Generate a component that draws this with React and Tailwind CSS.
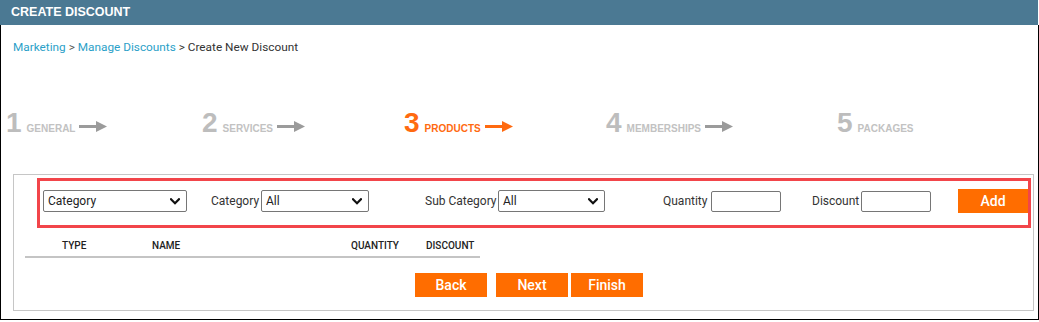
import React from "react";

const Arrow = ({ color }) => (
  <svg width="28" height="11" viewBox="0 0 28 11" className="ml-[4px] shrink-0">
    <rect x="0" y="4" width="18" height="3" fill={color} />
    <polygon points="17,0 28,5.5 17,11" fill={color} />
  </svg>
);

const Step = ({ n, label, active, arrow, w }) => {
  const numCls = active ? "text-[#ff6a10]" : "text-[#bdbdbd]";
  const lblCls = active ? "text-[#ff6a10]" : "text-[#c2c2c2]";
  return (
    <div className={`flex items-baseline shrink-0 ${w}`}>
      <span className={`font-['Liberation_Sans',Arial,sans-serif] font-bold text-[28px] leading-[28px] ${numCls}`}>{n}</span>
      <span className={`ml-[5px] font-['Liberation_Sans',Arial,sans-serif] font-bold text-[10px] leading-[12px] ${lblCls}`}>{label}</span>
      {arrow && <Arrow color={active ? "#ff6a10" : "#9b9b9b"} />}
    </div>
  );
};

const Chevron = () => (
  <svg width="10" height="7" viewBox="0 0 10 7" className="shrink-0">
    <path d="M1 1.2 L5 5.2 L9 1.2" fill="none" stroke="#111" strokeWidth="2.2" strokeLinecap="square" />
  </svg>
);

const Select = ({ text, w }) => (
  <div className={`flex items-center justify-between h-[22px] ${w} border border-[#767676] rounded-[2px] bg-white pl-[4px] pr-[6px] shrink-0`}>
    <span className="text-[12px] text-[#222] leading-none">{text}</span>
    <Chevron />
  </div>
);

const Input = () => (
  <div className="h-[21px] w-[70px] border border-[#767676] rounded-[2px] bg-white shrink-0" />
);

const Btn = ({ children, cls }) => (
  <div className={`h-[24px] w-[72px] bg-[#ff6d00] text-white flex items-center justify-center text-[14px] font-medium ${cls}`}>{children}</div>
);

export default function App() {
  return (
    <div className="w-[1039px] h-[322px] bg-white font-['Roboto',sans-serif]">
      <div className="w-[1038px] h-[25px] bg-[#4b7993] flex items-center pl-[11px]">
        <span className="text-white font-bold text-[12.5px] font-['Liberation_Sans',Arial,sans-serif]">CREATE DISCOUNT</span>
      </div>
      <div className="w-[1039px] h-[295px] border-l border-r-[1px] border-b border-black">
        <div className="pt-[15px] pl-[12px] text-[11.8px] leading-[14px] text-[#333]">
          <span className="text-[#2b9fc8]">Marketing</span>
          <span className="text-[#555]"> &gt; </span>
          <span className="text-[#2b9fc8]">Manage Discounts</span>
          <span> &gt; Create New Discount</span>
        </div>
        <div className="mt-[55px] pl-[5px] flex items-baseline">
          <Step n="1" label="GENERAL" arrow w="w-[196px]" />
          <Step n="2" label="SERVICES" arrow w="w-[202px]" />
          <Step n="3" label="PRODUCTS" arrow active w="w-[202px]" />
          <Step n="4" label="MEMBERSHIPS" arrow w="w-[231px]" />
          <Step n="5" label="PACKAGES" w="w-[150px]" />
        </div>
        <div className="ml-[12px] mt-[37px] w-[1021px] h-[137px] border border-[#c6c6c6] pt-[3px]">
          <div className="ml-[23px] w-[994px] h-[50px] border-[3px] border-[#f2454a] pt-[9px] pl-[3px] flex items-start">
            <Select text="Category" w="w-[144px]" />
            <div className="ml-[24px] flex items-center">
              <span className="w-[47px] text-[12px] text-[#333] whitespace-nowrap leading-[22px]">Category</span>
              <div className="ml-[3px]"><Select text="All" w="w-[108px]" /></div>
            </div>
            <div className="ml-[56px] flex items-center">
              <span className="w-[70px] text-[12px] text-[#333] whitespace-nowrap leading-[22px]">Sub Category</span>
              <div className="ml-[3px]"><Select text="All" w="w-[107px]" /></div>
            </div>
            <div className="ml-[58px] flex items-center">
              <span className="w-[45px] text-[12px] text-[#333] whitespace-nowrap leading-[22px]">Quantity</span>
              <div className="ml-[3px] mt-[1px]"><Input /></div>
            </div>
            <div className="ml-[31px] flex items-center">
              <span className="w-[46px] text-[12px] text-[#333] whitespace-nowrap leading-[22px]">Discount</span>
              <div className="ml-[3px] mt-[1px]"><Input /></div>
            </div>
            <div className="ml-[27px] h-[24px] w-[70px] bg-[#ff6d00] text-white flex items-center justify-center text-[14px] font-medium -mt-[1px]">Add</div>
          </div>
          <div className="ml-[11px] mt-[12px] w-[455px] border-b-2 border-[#c4c4c4] pb-[4px] pl-[37px] flex text-[10px] font-medium text-[#222] leading-[12px]">
            <span className="w-[90px]">TYPE</span>
            <span className="w-[199px]">NAME</span>
            <span className="w-[75px]">QUANTITY</span>
            <span>DISCOUNT</span>
          </div>
          <div className="mt-[15px] ml-[401px] flex">
            <Btn>Back</Btn>
            <Btn cls="ml-[9px]">Next</Btn>
            <Btn cls="ml-[3px]">Finish</Btn>
          </div>
        </div>
      </div>
    </div>
  );
}
